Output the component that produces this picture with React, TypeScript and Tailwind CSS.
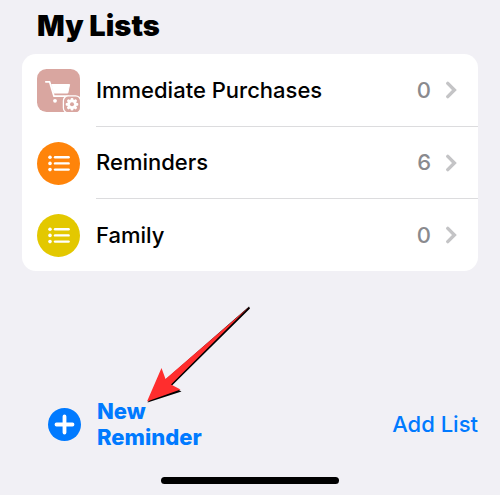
const CartIcon = () => (
  <svg viewBox="0 0 43 43" className="w-[43px] h-[43px] shrink-0" aria-hidden="true">
    <rect width="43" height="43" rx="9.5" fill="#d9a6a0" />
    <path
      d="M8.8 12.8h3.8l4.4 14.4h14.2"
      fill="none"
      stroke="#fff"
      strokeWidth="1.7"
      strokeLinecap="round"
      strokeLinejoin="round"
    />
    <path d="M14.6 15.500h18l-1.800 8.500H17z" fill="#fff" stroke="#fff" strokeLinejoin="round" />
    <circle cx="18" cy="31.8" r="1.9" fill="#fff" />
    <rect
      x="26.4"
      y="26.8"
      width="17.2"
      height="17.2"
      rx="5"
      fill="#d9a6a0"
      stroke="#fff"
      strokeWidth="1.3"
    />
    <g fill="#fff">
      <circle cx="35" cy="35.3" r="4.8" />
      {[0, 45, 90, 135].map((deg) => (
        <rect
          key={deg}
          x="33.6"
          y="29"
          width="2.8"
          height="12.6"
          rx="1"
          transform={`rotate(${deg} 35 35.3)`}
        />
      ))}
    </g>
    <circle cx="35" cy="35.3" r="2" fill="#d9a6a0" />
  </svg>
);

const ListIcon = ({ color }: { color: string }) => (
  <svg viewBox="0 0 43 43" className="w-[43px] h-[43px] shrink-0" aria-hidden="true">
    <circle cx="21.5" cy="21.5" r="21.5" fill={color} />
    {[15.2, 21.4, 27.6].map((y) => (
      <g key={y}>
        <circle cx="13" cy={y} r="1.8" fill="#fff" />
        <path d={`M18 ${y}h13.6`} stroke="#fff" strokeWidth="2.4" strokeLinecap="round" />
      </g>
    ))}
  </svg>
);

const Chevron = () => (
  <svg viewBox="0 0 12 18" className="w-3 h-[18px] shrink-0" aria-hidden="true">
    <path
      d="M1.8 2.4L8.4 9l-6.600 6.600"
      fill="none"
      stroke="#c4c4c6"
      strokeWidth="3.4"
      strokeLinecap="round"
      strokeLinejoin="miter"
    />
  </svg>
);

const lists = [
  { name: "Immediate Purchases", count: 0, icon: <CartIcon /> },
  { name: "Reminders", count: 6, icon: <ListIcon color="#ff840a" /> },
  { name: "Family", count: 0, icon: <ListIcon color="#e3c800" /> },
];

const ListRow = ({
  name,
  count,
  icon,
}: {
  name: string;
  count: number;
  icon: React.ReactNode;
}) => (
  <li className="group">
    <button className="flex items-center w-full pl-[15px] gap-x-4 text-left">
      {icon}
      <span className="flex flex-1 items-center h-[72px] group-first:h-[73px] border-b border-[#dcdcde] group-last:border-b-0 pr-5">
        <span className="flex-1 text-[22px] font-medium text-black">{name}</span>
        <span className="text-[22px] font-medium text-[#8a8a8e] mr-[15px]">{count}</span>
        <Chevron />
      </span>
    </button>
  </li>
);

export default function App() {
  return (
    <div className="min-h-screen flex flex-col bg-[#f1f0f5] font-['Inter','Liberation_Sans',sans-serif]">
      <main className="flex-1 px-[22px] pt-2">
        <h1 className="pl-[15px] text-[29px] leading-9 font-black text-black">My Lists</h1>
        <ul className="mt-[10px] bg-white rounded-[14px] overflow-hidden">
          {lists.map((list) => (
            <ListRow key={list.name} {...list} />
          ))}
        </ul>
      </main>

      <footer className="px-[22px]">
        <div className="flex items-center justify-between">
          <button className="relative flex items-center gap-x-4 pl-[26px] text-left text-[#007aff]">
            <svg viewBox="0 0 33 33" className="w-[33px] h-[33px] shrink-0" aria-hidden="true">
              <circle cx="16.5" cy="16.5" r="16.5" fill="#007aff" />
              <path d="M16.5 8.5v16M8.5 16.5h16" stroke="#fff" strokeWidth="3.8" strokeLinecap="round" />
            </svg>
            <span className="text-[22px] leading-[26px] font-extrabold">
              New
              <br />
              Reminder
            </span>
            <svg
              viewBox="0 0 106 98"
              className="absolute left-[124px] bottom-full w-[106px] h-[98px] -mb-[5px] pointer-events-none"
              aria-hidden="true"
            >
              <path d="M1.5 97.5L35.5 86.5 25.5 81 104 3.5 103 1.5 19 75z" fill="#000" />
              <path d="M1 96.5L15.5 63 19.5 74 103.5 1.5 25 79.5 34.5 84.5z" fill="#ff2d2d" />
            </svg>
          </button>
          <button className="text-[22px] font-medium text-[#007aff]">Add List</button>
        </div>
        <div className="mt-[27px] mb-[11px] mx-auto w-[178px] h-[7px] rounded-full bg-black" />
      </footer>
    </div>
  );
}
